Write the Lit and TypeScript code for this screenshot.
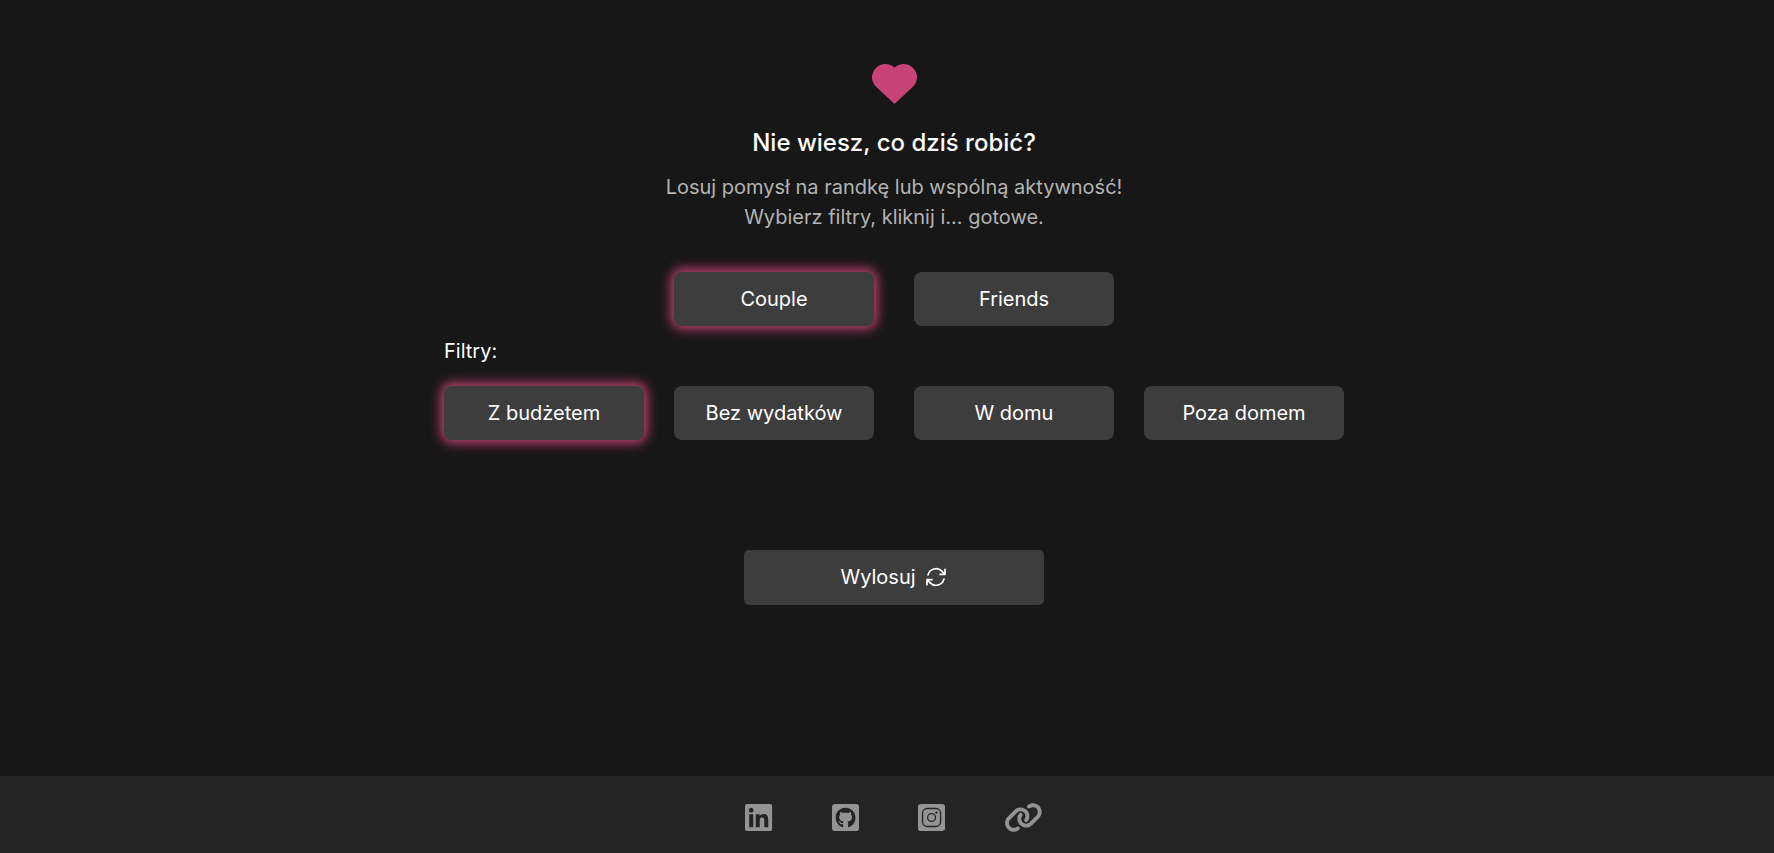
import { LitElement, html, css, svg } from "lit";
import { customElement, state } from "lit/decorators.js";

const linkedin = svg`<path d="M416 32H31.9C14.3 32 0 46.5 0 64.3v383.4C0 465.5 14.3 480 31.9 480H416c17.6 0 32-14.5 32-32.3V64.3c0-17.8-14.4-32.3-32-32.3zM135.4 416H69V202.2h66.5V416zm-33.2-243c-21.3 0-38.5-17.3-38.5-38.5S80.9 96 102.2 96c21.2 0 38.5 17.3 38.5 38.5 0 21.3-17.2 38.5-38.5 38.5zm282.1 243h-66.4V312c0-24.8-.5-56.7-34.5-56.7-34.6 0-39.9 27-39.9 54.9V416h-66.4V202.2h63.7v29.2h.9c8.9-16.8 30.6-34.5 62.9-34.5 67.2 0 79.7 44.3 79.7 101.9V416z"/>`;
const github = svg`<path d="M400 32H48C21.5 32 0 53.5 0 80v352c0 26.5 21.5 48 48 48h352c26.5 0 48-21.5 48-48V80c0-26.5-21.5-48-48-48zM277.3 415.7c-8.4 1.5-11.5-3.7-11.5-8 0-5.4.2-33 .2-55.3 0-15.6-5.2-25.5-11.3-30.7 37-4.1 76-9.2 76-73.1 0-18.2-6.5-27.3-17.1-39 1.7-4.3 7.4-22-1.7-45-13.9-4.3-45.7 17.9-45.7 17.9-13.2-3.7-27.5-5.6-41.6-5.6-14.1 0-28.4 1.9-41.6 5.6 0 0-31.8-22.2-45.7-17.9-9.1 22.9-3.5 40.6-1.7 45-10.6 11.7-15.6 20.8-15.6 39 0 63.6 37.3 69 74.3 73.1-4.8 4.3-9.1 11.7-10.6 22.3-9.5 4.3-33.8 11.7-48.3-13.9-9.1-15.8-25.5-17.1-25.5-17.1-16.2-.2-1.1 10.2-1.1 10.2 10.8 5 18.4 24.2 18.4 24.2 9.7 29.7 56.1 19.7 56.1 19.7 0 13.9.2 36.5.2 40.6 0 4.3-3 9.5-11.5 8-66-22.1-112.2-84.9-112.2-158.3 0-91.8 70.2-161.5 162-161.5S388 165.6 388 257.4c.1 73.4-44.7 136.3-110.7 158.3z"/>`;
const instagram = svg`<rect y="32" width="448" height="448" rx="48"/>
  <g class="cut"><rect x="75" y="107" width="298" height="298" rx="78"/><circle cx="224" cy="256" r="65"/></g>
  <circle class="dot" cx="304" cy="176" r="18"/>`;
const chain = svg`<path d="M579.8 267.7c56.5-56.5 56.5-148 0-204.5c-50-50-128.8-56.5-186.3-15.4l-1.6 1.1c-14.4 10.3-17.7 30.3-7.4 44.6s30.3 17.7 44.6 7.4l1.6-1.1c32.1-22.9 76-19.3 103.8 8.6c31.5 31.5 31.5 82.5 0 114L422.3 334.8c-31.5 31.5-82.5 31.5-114 0c-27.9-27.9-31.5-71.8-8.6-103.8l1.1-1.6c10.3-14.4 6.9-34.4-7.4-44.6s-34.4-6.9-44.6 7.4l-1.1 1.6C206.5 251.2 213 330 263 380c56.5 56.5 148 56.5 204.5 0L579.8 267.7zM60.2 244.3c-56.5 56.5-56.5 148 0 204.5c50 50 128.8 56.5 186.3 15.4l1.6-1.1c14.4-10.3 17.7-30.3 7.4-44.6s-30.3-17.7-44.6-7.4l-1.6 1.1c-32.1 22.9-76 19.3-103.8-8.6C74 372 74 321 105.5 289.5L217.7 177.2c31.5-31.5 82.5-31.5 114 0c27.9 27.9 31.5 71.8 8.6 103.9l-1.1 1.6c-10.3 14.4-6.9 34.4 7.4 44.6s34.4 6.9 44.6-7.4l1.1-1.6C433.5 260.8 427 182 377 132c-56.5-56.5-148-56.5-204.5 0L60.2 244.3z"/>`;

const links = [
  { name: "LinkedIn", box: "0 0 448 512", icon: linkedin },
  { name: "GitHub", box: "0 0 448 512", icon: github },
  { name: "Instagram", box: "0 0 448 512", icon: instagram },
  { name: "Strona autora", box: "0 0 640 512", icon: chain },
];

@customElement("app-root")
export class AppRoot extends LitElement {
  @state() private mode = "Couple";
  @state() private budget = "Z budżetem";
  @state() private place = "";

  static styles = css`
    :host {
      display: flex;
      flex-direction: column;
      min-height: 100vh;
      background: #171717;
      color: #fff;
      font: 400 20px/30px Inter, sans-serif;
    }
    main,
    footer {
      box-sizing: border-box;
      padding-left: 14px;
    }
    main {
      flex: 1;
      display: flex;
      flex-direction: column;
      align-items: center;
      padding-top: 64px;
    }
    .heart {
      display: block;
      width: 45px;
      height: 40px;
      fill: #c74375;
    }
    h1 {
      margin: 21px 0 11px;
      font-size: 24px;
      line-height: 36px;
      font-weight: 500;
    }
    .lead {
      margin: 0;
      text-align: center;
      color: #b3b3b3;
    }
    .modes {
      display: flex;
      gap: 40px;
      margin-top: 40px;
    }
    fieldset {
      margin: 10px 0 0;
      padding: 0;
      border: 0;
      min-width: 0;
    }
    legend {
      padding: 0;
      margin-bottom: 20px;
    }
    .filters,
    .pair {
      display: flex;
      flex-wrap: wrap;
    }
    .filters {
      gap: 40px;
    }
    .pair {
      gap: 30px;
    }
    button {
      border: 0;
      padding: 12px 0;
      background: #3d3d3d;
      color: inherit;
      font: inherit;
      cursor: pointer;
    }
    .option {
      width: 200px;
      border-radius: 8px;
    }
    .option[aria-pressed="true"] {
      box-shadow: 0 0 12px 3px #c74375;
    }
    .draw {
      display: flex;
      justify-content: center;
      align-items: center;
      gap: 8px;
      width: 300px;
      padding-bottom: 13px;
      margin-top: 110px;
      border-radius: 5px;
    }
    .draw svg {
      width: 24px;
      height: 24px;
      fill: none;
      stroke: currentColor;
      stroke-width: 1.7;
      stroke-linecap: round;
      stroke-linejoin: round;
    }
    footer {
      display: flex;
      justify-content: center;
      gap: 59px;
      padding-top: 26px;
      padding-bottom: 20px;
      background: #242424;
    }
    footer a {
      display: block;
      height: 31px;
      color: #939393;
    }
    footer svg {
      display: block;
      height: 31px;
      fill: currentColor;
    }
    .cut {
      fill: none;
      stroke: #242424;
      stroke-width: 22;
    }
    .dot {
      fill: #242424;
    }
  `;

  private option(label: string, current: string, pick: (v: string) => void) {
    return html`<button
      class="option"
      type="button"
      aria-pressed=${label === current ? "true" : "false"}
      @click=${() => pick(label)}
    >${label}</button>`;
  }

  render() {
    const mode = (v: string) => (this.mode = v);
    const budget = (v: string) => (this.budget = v);
    const place = (v: string) => (this.place = v);
    return html`
      <main>
        <svg class="heart" viewBox="0 0 45 40" aria-hidden="true">
          <path d="M22.5 40L3.9 22.6A13.3 13.3 0 0 1 0 13.3A13.3 13.3 0 0 1 13.3 0A13.3 13.3 0 0 1 22.5 3.7A13.3 13.3 0 0 1 31.7 0A13.3 13.3 0 0 1 45 13.3A13.3 13.3 0 0 1 41.1 22.6Z" />
        </svg>
        <h1>Nie wiesz, co dziś robić?</h1>
        <p class="lead">
          Losuj pomysł na randkę lub wspólną aktywność!<br />Wybierz filtry, kliknij i... gotowe.
        </p>
        <div class="modes">
          ${this.option("Couple", this.mode, mode)}
          ${this.option("Friends", this.mode, mode)}
        </div>
        <fieldset>
          <legend>Filtry:</legend>
          <div class="filters">
            <div class="pair">
              ${this.option("Z budżetem", this.budget, budget)}
              ${this.option("Bez wydatków", this.budget, budget)}
            </div>
            <div class="pair">
              ${this.option("W domu", this.place, place)}
              ${this.option("Poza domem", this.place, place)}
            </div>
          </div>
        </fieldset>
        <button class="draw" type="button">
          Wylosuj
          <svg viewBox="0 0 24 24" aria-hidden="true">
            <path d="M16.023 9.348h4.992v-.001M2.985 19.644v-4.992m0 0h4.992m-4.993 0l3.181 3.183a8.25 8.25 0 0 0 13.803-3.7M4.031 9.865a8.25 8.25 0 0 1 13.803-3.7l3.181 3.182m0-4.991v4.99" />
          </svg>
        </button>
      </main>
      <footer>
        ${links.map(
          (l) => html`<a href="#" aria-label=${l.name}><svg viewBox=${l.box} aria-hidden="true">${l.icon}</svg></a>`
        )}
      </footer>
    `;
  }
}
